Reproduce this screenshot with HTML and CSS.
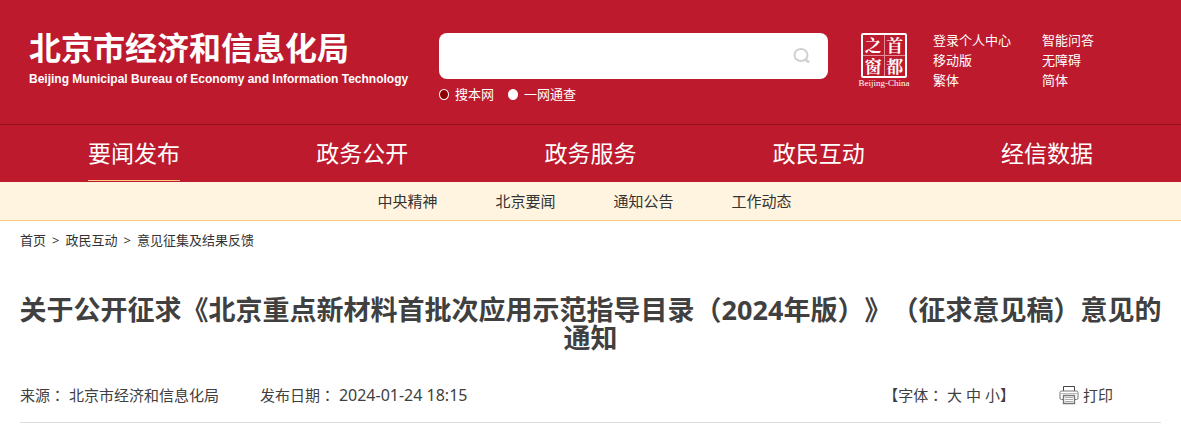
FILE: index.html
```html
<!DOCTYPE html>
<html lang="zh-CN">
<head>
<meta charset="utf-8">
<meta name="viewport" content="width=device-width, initial-scale=1">
<title>北京市经济和信息化局</title>
<link rel="stylesheet" href="styles.css">
</head>
<body>
<header class="header">
  <div class="top">
    <a class="brand" href="#">
      <span class="brand-cn">北京市经济和信息化局</span>
      <span class="brand-en">Beijing Municipal Bureau of Economy and Information Technology</span>
    </a>
    <form class="search">
      <div class="search-box">
        <input class="search-input" type="text" aria-label="搜索">
        <button class="search-btn" type="button" aria-label="搜索">
          <svg width="18" height="18" viewBox="0 0 18 18" fill="none" stroke="#d0d0d0" stroke-width="2"><ellipse cx="8" cy="8" rx="6.500" ry="6"/><path d="M12.500 12.500l3.500 3" stroke-width="2.500"/></svg>
        </button>
      </div>
      <div class="scope">
        <label class="scope-item"><input class="radio" type="radio" name="scope" checked>搜本网</label>
        <label class="scope-item"><input class="radio" type="radio" name="scope">一网通查</label>
      </div>
    </form>
    <a class="seal" href="#">
      <span class="seal-grid"><span class="seal-char">之</span><span class="seal-char">首</span><span class="seal-char">窗</span><span class="seal-char">都</span></span>
      <span class="seal-en">Beijing-China</span>
    </a>
    <div class="links">
      <a href="#">登录个人中心</a><a href="#">智能问答</a>
      <a href="#">移动版</a><a href="#">无障碍</a>
      <a href="#">繁体</a><a href="#">简体</a>
    </div>
  </div>
  <nav class="nav">
    <div class="nav-cell"><a class="nav-link active" href="#">要闻发布</a></div>
    <div class="nav-cell"><a class="nav-link" href="#">政务公开</a></div>
    <div class="nav-cell"><a class="nav-link" href="#">政务服务</a></div>
    <div class="nav-cell"><a class="nav-link" href="#">政民互动</a></div>
    <div class="nav-cell"><a class="nav-link" href="#">经信数据</a></div>
  </nav>
</header>
<nav class="subnav">
  <a href="#">中央精神</a><a href="#">北京要闻</a><a href="#">通知公告</a><a href="#">工作动态</a>
</nav>
<main class="page">
  <div class="crumbs"><a href="#">首页</a><span>&gt;</span><a href="#">政民互动</a><span>&gt;</span><a href="#">意见征集及结果反馈</a></div>
  <h1 class="title">关于公开征求《北京重点新材料首批次应用示范指导目录<span class="mid" lang="zh-TW">（</span>2024年版<span class="mid" lang="zh-TW">）</span>》<span class="mid" lang="zh-TW">（</span>征求意见稿<span class="mid" lang="zh-TW">）</span>意见的通知</h1>
  <div class="meta">
    <span class="source">来源<span class="mid" lang="zh-TW">：</span> 北京市经济和信息化局</span>
    <span class="date">发布日期<span class="mid" lang="zh-TW">：</span> <time class="time">2024-01-24 18:15</time></span>
    <span class="sizes">【字体<span class="mid" lang="zh-TW">：</span> <button class="size" type="button">大</button> <button class="size" type="button">中</button> <button class="size" type="button">小</button>】</span>
    <button class="print" type="button">
      <svg width="20" height="20" viewBox="0 0 20 20" fill="none" stroke="#777"><path d="M4.5 6V1.5h11V6" stroke="#444"/><path d="M4 14.5H2.5q-1.500 0-1.500-1.500V7.500q0-1.500 1.500-1.500h15q1.500 0 1.500 1.500V13q0 1.500-1.500 1.500H16"/><path d="M1.500 8.500h17" stroke="#bbb"/><path d="M4.500 10.500h11v8h-11z" stroke-width="1.400"/><path d="M6 12.500h8M6 14.500h8M6 16.500h8" stroke="#aaa"/></svg>
      打印
    </button>
  </div>
</main>
</body>
</html>
```
FILE: styles.css
```css
* { box-sizing: border-box; }
body {
  margin: 0;
  background: #fff;
  color: #333;
  font-family: "Noto Sans", "Noto Sans CJK SC", sans-serif;
  font-size: 15px;
  text-spacing-trim: space-all;
}
a { color: inherit; text-decoration: none; }
button {
  border: 0;
  padding: 0;
  background: none;
  color: inherit;
  font: inherit;
  cursor: pointer;
}
.mid { font-family: "Noto Sans CJK TC", sans-serif; }

.header { background: #bd1a2d; color: #fff; }
.top {
  display: flex;
  align-items: flex-start;
  height: 124px;
  padding: 30px 20px 0 29px;
}
.brand { flex: none; width: 410px; }
.brand-cn {
  display: block;
  font-size: 32px;
  font-weight: 700;
  line-height: 36px;
}
.brand-en {
  display: block;
  font: 700 12px/26px "Liberation Sans", sans-serif;
  white-space: nowrap;
}
.search { flex: 0 1 389px; padding-top: 3px; }
.search-box {
  display: flex;
  align-items: center;
  height: 46px;
  padding-right: 17px;
  border-radius: 8px;
  background: #fff;
}
.search-input {
  flex: 1;
  min-width: 0;
  height: 100%;
  padding: 0 12px;
  border: 0;
  background: none;
  font: inherit;
}
.search-btn { display: flex; }
.scope {
  display: flex;
  gap: 14px;
  padding-top: 5px;
  font-size: 13px;
  line-height: 20px;
}
.scope-item { display: flex; align-items: center; gap: 6px; }
.radio {
  appearance: none;
  width: 10px;
  height: 11px;
  margin: 0;
  border: 1px solid #fff;
  border-radius: 50%;
  background: #fff;
}
.radio:checked { background: #8b0000; }
.seal {
  flex: none;
  display: flex;
  flex-direction: column;
  align-items: center;
  width: 52px;
  margin-left: 30px;
  padding-top: 3px;
}
.seal-grid {
  display: grid;
  grid-template-columns: 1fr 1fr;
  gap: 1px;
  width: 46px;
  height: 45px;
  border: 2px solid #fff;
  border-radius: 2px;
  background: #e58d98;
}
.seal-char {
  background: #bd1a2d;
  font: 700 17px/20px "Noto Serif CJK SC", "Noto Sans CJK SC", serif;
  text-align: center;
}
.seal-en {
  font: 400 9px/10px "Liberation Serif", serif;
  white-space: nowrap;
}
.links {
  display: grid;
  grid-template-columns: 109px auto;
  margin-left: 23px;
  font-size: 13px;
  line-height: 20px;
}
.nav {
  display: grid;
  grid-template-columns: repeat(5, 1fr);
  padding: 0 20px;
  border-top: 1px solid #920f20;
}
.nav-cell { display: flex; justify-content: center; height: 57px; }
.nav-link {
  height: 56px;
  font-size: 23px;
  line-height: 56px;
}
.nav-link.active { border-bottom: 1px solid #fdca84; }

.subnav {
  display: flex;
  justify-content: center;
  gap: 58px;
  height: 39px;
  padding-right: 12px;
  border-bottom: 1px solid #fdca84;
  background: #fff4df;
  line-height: 38px;
}

.page { padding: 0 20px; }
.crumbs {
  display: flex;
  gap: 6px;
  padding-top: 9px;
  font-size: 13px;
  line-height: 20px;
}
.title {
  margin: 45px -8px 0;
  color: #404040;
  font-size: 27px;
  font-weight: 700;
  line-height: 28px;
  text-align: center;
}
.meta {
  display: flex;
  align-items: center;
  height: 54px;
  margin-top: 17px;
  padding-right: 48px;
  padding-bottom: 2px;
  border-bottom: 1px solid #ddd;
  color: #404040;
}
.date { margin-left: 41px; }
.time { font-size: 16px; }
.sizes { margin-left: auto; }
.print {
  display: flex;
  align-items: center;
  gap: 4px;
  margin-left: 44px;
}
```
